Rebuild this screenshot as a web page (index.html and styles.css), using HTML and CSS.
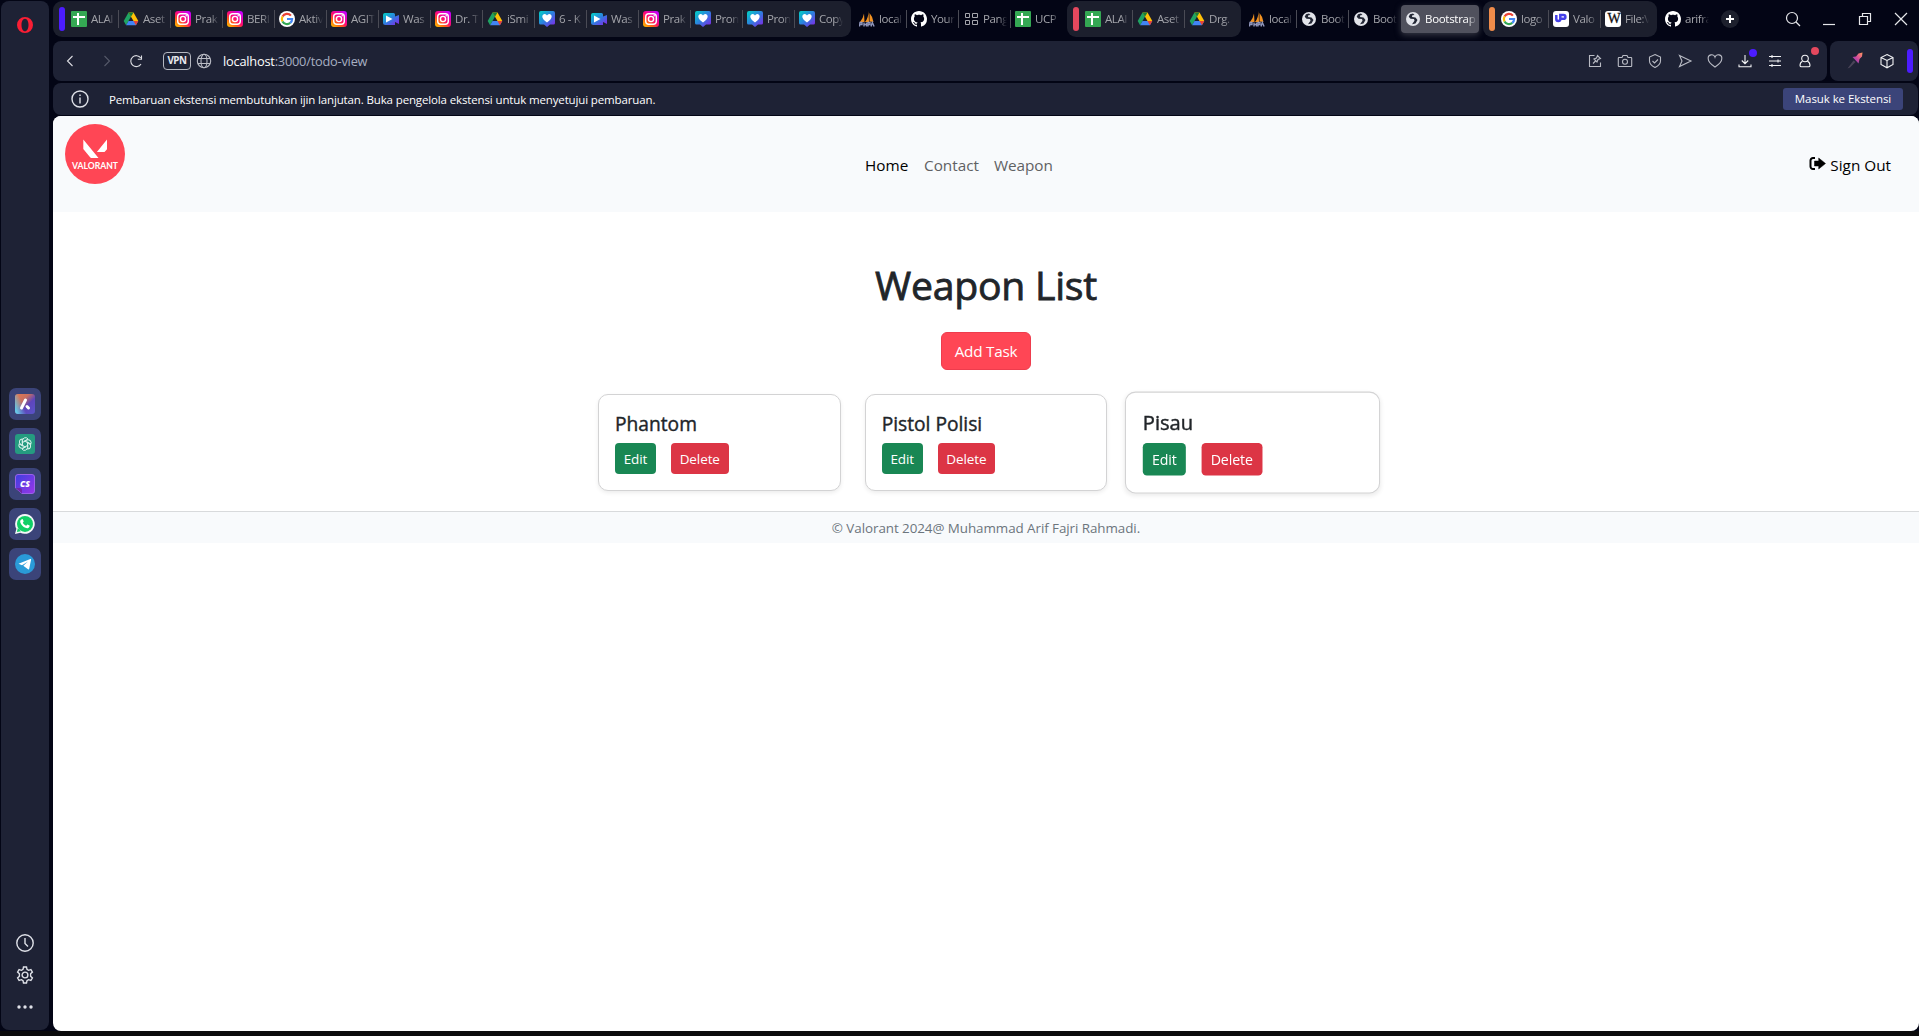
FILE: index.html
```html
<!DOCTYPE html>
<html lang="id">
<head>
<meta charset="utf-8">
<title>Weapon List</title>
<link rel="stylesheet" href="styles.css">
</head>
<body>
<svg class="sprite" width="0" height="0">
  <defs>
    <linearGradient id="g-ig" x1="0" y1="1" x2=".8" y2="0"><stop offset="0" stop-color="#ffc800"/><stop offset=".3" stop-color="#ff6a10"/><stop offset=".55" stop-color="#ff0a70"/><stop offset="1" stop-color="#c800ff"/></linearGradient>
    <linearGradient id="g-was" x1="0" y1="0" x2="1" y2="1"><stop offset="0" stop-color="#00d4c4"/><stop offset=".5" stop-color="#2f7de0"/><stop offset="1" stop-color="#8a1fe8"/></linearGradient>
    <linearGradient id="g-aria" x1="0" y1="0" x2="1" y2="1"><stop offset="0" stop-color="#e57a50"/><stop offset=".35" stop-color="#c8705f"/><stop offset=".6" stop-color="#5e45bb"/><stop offset="1" stop-color="#5a55c8"/></linearGradient>
    <linearGradient id="g-aria2" x1="0" y1=".7" x2="1" y2="0.3"><stop offset="0" stop-color="#65c8e8"/><stop offset=".4" stop-color="#65c8e8" stop-opacity="0"/></linearGradient>
    <linearGradient id="g-cs" x1="0" y1="0" x2="1" y2="1"><stop offset="0" stop-color="#3b3fe0"/><stop offset="1" stop-color="#9b35e8"/></linearGradient>
    <linearGradient id="g-pin" x1="1" y1="0" x2="0" y2="1"><stop offset="0" stop-color="#ff9a5c"/><stop offset=".5" stop-color="#d64a9a"/><stop offset="1" stop-color="#5a3ac0"/></linearGradient>
  </defs>
  <symbol id="sheet" viewBox="0 0 16 16"><rect width="16" height="16" rx="1" fill="#34a853"/><path d="M2 6h12M7 2v12" stroke="#fff" stroke-width="2"/></symbol>
  <symbol id="drive" viewBox="0 0 16 16"><path d="M5.500 1.500 0.700 10l2.400 4.200L8 5.600z" fill="#1fa463"/><path d="M5.500 1.500h5L15.300 10h-4.800z" fill="#ffc107"/><path d="M3.100 14.200 5.500 10h9.800l-2.400 4.200z" fill="#4285f4"/><path d="M10.500 10h4.800l-2.400 4.200z" fill="#ea4335"/><path d="M5.500 1.500h5L8 5.800z" fill="#188038"/></symbol>
  <symbol id="insta" viewBox="0 0 16 16"><rect width="16" height="16" rx="3" fill="url(#g-ig)"/><rect x="2.700" y="2.700" width="10.600" height="10.600" rx="3" fill="none" stroke="#fff" stroke-width="1.400"/><circle cx="8" cy="8" r="2.600" fill="none" stroke="#fff" stroke-width="1.400"/><circle cx="11.200" cy="4.800" r=".8" fill="#fff"/></symbol>
  <symbol id="google" viewBox="0 0 16 16"><circle cx="8" cy="8" r="8" fill="#fff"/><g fill="none" stroke-width="2.200"><path d="M11.900 4.600A5.100 5.100 0 0 0 3.500 5.600" stroke="#ea4335"/><path d="M3.500 5.600a5.100 5.100 0 0 0 0 4.800" stroke="#fbbc05"/><path d="M3.500 10.400a5.100 5.100 0 0 0 7.800 1.500" stroke="#34a853"/><path d="M11.300 11.900A5.100 5.100 0 0 0 13.100 8H8" stroke="#4285f4"/></g></symbol>
  <symbol id="video" viewBox="0 0 16 16"><path d="M2 2h8.500a1.500 1.500 0 0 1 1.500 1.500V5.500L16 4v9l-4-2v3H2.500A2.500 2.500 0 0 1 0 11.500V4a2 2 0 0 1 2-2z" fill="url(#g-was)"/><path d="M3 4.500 9.500 8 3 11.500z" fill="#fff"/></symbol>
  <symbol id="heart" viewBox="0 0 16 16"><path d="M2 0h12a2 2 0 0 1 2 2v10a1.500 1.500 0 0 1-1.500 1.500H11L8 16l-3-2.500H1.500A1.500 1.500 0 0 1 0 12V2a2 2 0 0 1 2-2z" fill="url(#g-was)"/><path d="M8 11.500C1 7 3.300 3 5.700 3 7 3 8 4.400 8 4.400S9 3 10.300 3C12.700 3 15 7 8 11.500z" fill="#fff"/></symbol>
  <symbol id="pma" viewBox="0 0 16 16"><path d="M1 11Q4 8 5 2.500L5.500 11zM6 11Q9.500 7 9.500 0L10 11zM10.500 10.500V2Q14 6 14.500 11z" fill="#f29222"/><path d="M.5 15.500 1 11.500h2v2H1.500M5 15.500v-4M7.500 11.500v4M5 13.500h2.500M9 15.500v-4h2v2H9.500M12 15.500l1.300-4 1.800 4" fill="none" stroke="#9298bd" stroke-width="1.400"/></symbol>
  <symbol id="github" viewBox="0 0 16 16"><path fill="#fff" d="M8 0C3.580 0 0 3.580 0 8c0 3.540 2.290 6.530 5.470 7.590.4.070.55-.17.55-.38 0-.19-.01-.82-.01-1.490-2.010.37-2.530-.49-2.690-.94-.09-.23-.48-.94-.82-1.130-.28-.15-.68-.52-.01-.53.63-.01 1.080.58 1.230.82.72 1.210 1.870.87 2.330.66.07-.52.28-.87.51-1.070-1.780-.2-3.640-.89-3.640-3.950 0-.87.31-1.590.82-2.150-.08-.2-.36-1.020.08-2.120 0 0 .67-.21 2.200.82.64-.18 1.320-.27 2-.27s1.360.09 2 .27c1.530-1.040 2.200-.82 2.200-.82.44 1.100.16 1.920.08 2.120.51.56.82 1.270.82 2.150 0 3.070-1.870 3.750-3.650 3.950.29.25.54.73.54 1.480 0 1.070-.01 1.930-.01 2.200 0 .21.15.46.55.38A8.010 8.010 0 0 0 16 8c0-4.420-3.580-8-8-8z"/></symbol>
  <symbol id="panels" viewBox="0 0 16 16"><path d="M2.500 2.500h4v4h-4zM9.500 2.500h5v4h-5zM2.500 9.500h4v4h-4zM9.500 9.500h5v4h-5z" fill="none" stroke="#a5a6ac"/></symbol>
  <symbol id="world" viewBox="0 0 16 16"><circle cx="8" cy="8" r="7" fill="#e2e4ea"/><path d="M8 2.500 5 3.300 3.700 5.800 5.500 7.800 9 8l.5 1.800L7 13.300l3.500-.8L12.500 9 10.500 6.500 7 6l.3-1.800L9.500 4z" fill="#232735"/></symbol>
  <symbol id="up" viewBox="0 0 16 16"><rect width="16" height="16" rx="3" fill="#fff"/><path d="M3.300 4v4a2 2 0 0 0 4 0V4h3.200a1.800 1.800 0 0 1 0 3.800H7" fill="none" stroke="#4540e8" stroke-width="2.500"/></symbol>
</svg>

<div class="browser">
  <aside class="sidebar">
    <svg class="opera" width="18" height="18" viewBox="0 0 18 18"><path fill-rule="evenodd" fill="#fa1e34" d="M9 1a8 8 0 1 0 0 16A8 8 0 0 0 9 1zm0 1.700c2.100 0 3.500 2.800 3.500 6.300s-1.400 6.300-3.500 6.300S5.500 12.500 5.500 9 6.900 2.700 9 2.700z"/></svg>
    <div class="apps">
      <span class="app"><svg width="20" height="20" viewBox="0 0 20 20"><rect width="20" height="20" rx="3" fill="url(#g-aria)"/><rect width="20" height="20" rx="3" fill="url(#g-aria2)"/><path d="M6.500 14 10.500 6M12 12.500l1.500 1.500" stroke="#fff" stroke-width="3" stroke-linecap="round"/></svg></span>
      <span class="app"><svg width="20" height="20" viewBox="0 0 20 20"><rect width="20" height="20" rx="3" fill="#259b80"/><g fill="none" stroke="#d5f0ea" stroke-width="1"><path id="petal" d="M7.500 12V6.600a3 3 0 0 1 5.500-1.600L8.800 7.500"/><use href="#petal" transform="rotate(60 10 10)"/><use href="#petal" transform="rotate(120 10 10)"/><use href="#petal" transform="rotate(180 10 10)"/><use href="#petal" transform="rotate(240 10 10)"/><use href="#petal" transform="rotate(300 10 10)"/></g></svg></span>
      <span class="app"><svg width="20" height="20" viewBox="0 0 20 20"><path d="M3 .5h14A2.500 2.500 0 0 1 19.500 3v14a2.500 2.500 0 0 1-2.500 2.500H7L.5 14V3A2.500 2.500 0 0 1 3 .5z" fill="url(#g-cs)" stroke="#9a62e8"/><path d="M.5 14H5a2 2 0 0 1 2 2v3.500" fill="#7026a8"/><text x="10" y="13" text-anchor="middle" font-family="Open Sans,sans-serif" font-size="8.500" font-weight="800" font-style="italic" fill="#fff">CS</text></svg></span>
      <span class="app"><svg width="20" height="20" viewBox="0 0 20 20"><path d="M10 0a9.900 9.900 0 1 1-4.700 18.700L0 20l1.400-5.200A9.900 9.900 0 0 1 10 0z" fill="#f4f6f8"/><circle cx="10" cy="9.900" r="8" fill="#10cf66"/><path d="M1.900 18l1-4 3 3.200z" fill="#10cf66"/><path d="M6.800 5.200c.6-.3 1 0 1.200.5l.7 1.700-.9 1.300c.8 1.500 1.800 2.400 3.400 3.100l1.200-1.200 2.200 1c.3.900-.5 2.400-1.800 2.600-3 .5-7.500-3.500-7.600-6.700 0-1 .6-1.900 1.600-2.300z" fill="#fff"/></svg></span>
      <span class="app"><svg width="20" height="20" viewBox="0 0 20 20"><circle cx="10" cy="10" r="10" fill="#2a9bd8"/><path d="M3.500 9.700 15.300 5c.6-.2.900.1.800.8l-1.900 9c-.2.700-.7.800-1.200.4L8.300 11.800 13 7.500l-6 3.800z" fill="#fff"/></svg></span>
    </div>
    <div class="tools">
      <svg width="18" height="18" viewBox="0 0 18 18"><circle cx="9" cy="9" r="8.200"/><path d="M9 4v5.500l3 3"/></svg>
      <svg width="18" height="18" viewBox="0 0 18 18"><path d="M7.500 1h3l.5 2.400 1.500.9 2.400-.8 1.500 2.600-1.800 1.600v2.600l1.800 1.600-1.500 2.600-2.400-.8-1.500.9-.5 2.400h-3L7 14.600l-1.500-.9-2.400.8-1.500-2.600 1.800-1.600V7.700L1.600 6.100l1.500-2.600 2.400.8L7 3.400z"/><circle cx="9" cy="9" r="2.900"/></svg>
      <svg width="18" height="18" viewBox="0 0 18 18"><g fill="#dfe1e8" stroke="none"><circle cx="3" cy="9" r="1.700"/><circle cx="9" cy="9" r="1.700"/><circle cx="15" cy="9" r="1.700"/></g></svg>
    </div>
  </aside>

  <div class="main">
    <div class="tabs">
      <div class="group">
        <i class="mark"></i>
        <span class="tab"><svg><use href="#sheet"/></svg><b>ALAI</b></span>
        <span class="tab"><svg><use href="#drive"/></svg><b>Aset</b></span>
        <span class="tab"><svg><use href="#insta"/></svg><b>Prak</b></span>
        <span class="tab"><svg><use href="#insta"/></svg><b>BERI</b></span>
        <span class="tab"><svg><use href="#google"/></svg><b>Aktiv</b></span>
        <span class="tab"><svg><use href="#insta"/></svg><b>AGIT</b></span>
        <span class="tab"><svg><use href="#video"/></svg><b>Was</b></span>
        <span class="tab"><svg><use href="#insta"/></svg><b>Dr. T</b></span>
        <span class="tab"><svg><use href="#drive"/></svg><b>iSmi</b></span>
        <span class="tab"><svg><use href="#heart"/></svg><b>6 - K</b></span>
        <span class="tab"><svg><use href="#video"/></svg><b>Was</b></span>
        <span class="tab"><svg><use href="#insta"/></svg><b>Prak</b></span>
        <span class="tab"><svg><use href="#heart"/></svg><b>Pron</b></span>
        <span class="tab"><svg><use href="#heart"/></svg><b>Pron</b></span>
        <span class="tab last"><svg><use href="#heart"/></svg><b>Copy</b></span>
      </div>
      <div class="loose">
        <span class="tab"><svg><use href="#pma"/></svg><b>local</b></span>
        <span class="tab"><svg><use href="#github"/></svg><b>Your</b></span>
        <span class="tab"><svg><use href="#panels"/></svg><b>Pang</b></span>
        <span class="tab last"><svg><use href="#sheet"/></svg><b>UCP</b></span>
      </div>
      <div class="group">
        <i class="mark red"></i>
        <span class="tab"><svg><use href="#sheet"/></svg><b>ALAI</b></span>
        <span class="tab"><svg><use href="#drive"/></svg><b>Aset</b></span>
        <span class="tab last"><svg><use href="#drive"/></svg><b>Drg.</b></span>
      </div>
      <div class="loose">
        <span class="tab"><svg><use href="#pma"/></svg><b>local</b></span>
        <span class="tab"><svg><use href="#world"/></svg><b>Boot</b></span>
        <span class="tab last"><svg><use href="#world"/></svg><b>Boot</b></span>
        <span class="tab active"><svg><use href="#world"/></svg><b>Bootstrap</b></span>
      </div>
      <div class="group">
        <i class="mark orange"></i>
        <span class="tab"><svg><use href="#google"/></svg><b>logo</b></span>
        <span class="tab"><svg><use href="#up"/></svg><b>Valo</b></span>
        <span class="tab last"><span class="wiki">W</span><b>File:V</b></span>
      </div>
      <div class="loose">
        <span class="tab last"><svg><use href="#github"/></svg><b>arifra</b></span>
      </div>
      <svg class="plus" width="18" height="18" viewBox="0 0 18 18"><circle cx="9" cy="9" r="9" fill="#1d202d"/><path d="M9 5v8M5 9h8" stroke="#fff" stroke-width="2"/></svg>
      <div class="window">
        <svg width="16" height="16" viewBox="0 0 16 16"><circle cx="7" cy="7" r="5.500"/><path d="m11 11 4 4"/></svg>
        <svg width="16" height="16" viewBox="0 0 16 16"><path d="M2 13.500h12"/></svg>
        <svg width="16" height="16" viewBox="0 0 16 16"><path d="M2.500 5.500h8v8h-8zM5.500 5.500v-3h8v8h-3"/></svg>
        <svg width="16" height="16" viewBox="0 0 16 16"><path d="m2 2 12 12M14 2 2 14"/></svg>
      </div>
    </div>

    <div class="toolbar">
      <div class="address">
        <svg class="back" width="16" height="16" viewBox="0 0 16 16"><path d="M10.500 3 5.500 8l5 5"/></svg>
        <svg class="fwd" width="16" height="16" viewBox="0 0 16 16"><path d="m5.500 3 5 5-5 5"/></svg>
        <svg class="reload" width="16" height="16" viewBox="0 0 16 16"><path d="M12.800 5A5.500 5.500 0 1 0 13 11M13.500 2.500v3.700H9.800"/></svg>
        <span class="vpn">VPN</span>
        <svg class="globe" width="16" height="16" viewBox="0 0 16 16"><circle cx="8" cy="8" r="6.700"/><ellipse cx="8" cy="8" rx="3" ry="6.700"/><path d="M2 5.500h12M2 10.500h12"/></svg>
        <span class="url">localhost<em>:3000/todo-view</em></span>
        <div class="actions">
          <svg viewBox="0 0 16 16"><path d="M7.500 2.500h-5v11h11v-4M6 10.500l3-3M7 6l3 3 1-2.500 2.500-1-3-3-1 2.500z"/></svg>
          <svg viewBox="0 0 16 16"><path d="M2 4.500h3l1-2h4l1 2h3a.7.700 0 0 1 .7.700v7.600a.7.700 0 0 1-.7.700H2a.7.700 0 0 1-.7-.7V5.200A.7.700 0 0 1 2 4.500z"/><circle cx="8" cy="8.700" r="2.500"/></svg>
          <svg viewBox="0 0 16 16"><path d="M8 1.500 13.500 4v4c0 3-2.500 5-5.500 6.500C5 13 2.500 11 2.500 8V4zM5.500 8l2 2 3.500-3.500"/></svg>
          <svg viewBox="0 0 16 16"><path d="m2.500 2.500 11.500 5.500-11.500 5.500L5 8z"/></svg>
          <svg viewBox="0 0 16 16"><path d="M8 14C5 12 1.200 9.500 1.200 5.700A3.500 3.500 0 0 1 8 4.200a3.500 3.500 0 0 1 6.800 1.500C14.800 9.500 11 12 8 14z"/></svg>
          <span class="badged"><svg viewBox="0 0 16 16" class="bright"><path d="M8 2v8.500M4.800 7.500 8 10.700l3.200-3.200M2 11.500v2.300h12v-2.300"/></svg><i class="dot"></i></span>
          <svg viewBox="0 0 16 16" class="bright"><path d="M2 3.500h12M2 8h12M2 12.500h12M5 2v3M11 6.500v3M5 11v3"/></svg>
          <span class="badged"><svg viewBox="0 0 16 16" class="bright"><circle cx="8" cy="5.500" r="3.300"/><path d="M5.500 8.200C3.500 9 3 10.500 3 12.500c0 1 .5 1.300 1.500 1.300h7c1 0 1.500-.3 1.500-1.300 0-2-.5-3.500-2.500-4.300"/></svg><i class="dot coral"></i></span>
        </div>
      </div>
      <div class="extras">
        <svg class="pin" width="18" height="18" viewBox="0 0 18 18"><path d="M1.500 16.500 7.500 8.500l2 1.500-5.500 5.500z" fill="#4a4558"/><path d="m6.500 5 3.500-.500L12.500 1.500 16.500.5l-.5 4-2.500 2.500-1 4.500z" fill="url(#g-pin)"/></svg>
        <svg class="bright" width="16" height="16" viewBox="0 0 16 16"><path d="M8 1.500 14 4.500v7L8 14.800 2 11.500v-7zM2 4.500l6 3 6-3M8 7.500v7"/></svg>
        <i class="mark"></i>
      </div>
    </div>

    <div class="notice">
      <svg width="18" height="18" viewBox="0 0 18 18"><circle cx="9" cy="9" r="8"/><path d="M9 7.500v6M9 4.500v1.500"/></svg>
      <span class="message">Pembaruan ekstensi membutuhkan ijin lanjutan. Buka pengelola ekstensi untuk menyetujui pembaruan.</span>
      <span class="open">Masuk ke Ekstensi</span>
    </div>

    <div class="page">
      <header class="navbar">
        <svg class="logo" width="60" height="60" viewBox="0 0 60 60"><circle cx="30" cy="30" r="30" fill="#ff4655"/><path d="M18.300 15.500 33.500 34h-7.200a1.500 1.500 0 0 1-1-.5l-7-8.600zM42 15.500v9.800l-2.500 2.700h-7.600z" fill="#fff"/><text x="7" y="45" textLength="46" lengthAdjust="spacingAndGlyphs" font-family="Lato,sans-serif" font-size="9.200" font-weight="700" fill="#fff">VALORANT</text></svg>
        <nav class="links">
          <a class="home">Home</a><a class="contact">Contact</a><a class="weapon">Weapon</a>
        </nav>
        <a class="signout"><svg width="17" height="16" viewBox="0 0 17 16"><path d="M6 2H4a2.500 2.500 0 0 0-2.500 2.500v6A2.500 2.500 0 0 0 4 13h2" fill="none" stroke="#000" stroke-width="2"/><path d="M5.500 5h4.200V2L16.500 7.500 9.700 13v-3H5.500z" stroke="#000" stroke-linejoin="round" stroke-width=".5"/></svg><span>Sign Out</span></a>
      </header>
      <main class="content">
        <h1>Weapon List</h1>
        <button class="add">Add Task</button>
        <div class="cards">
          <article class="card"><h5>Phantom</h5><div class="buttons"><button class="edit">Edit</button><button class="delete">Delete</button></div></article>
          <article class="card"><h5>Pistol Polisi</h5><div class="buttons"><button class="edit">Edit</button><button class="delete">Delete</button></div></article>
          <article class="card raised"><h5>Pisau</h5><div class="buttons"><button class="edit">Edit</button><button class="delete">Delete</button></div></article>
        </div>
      </main>
      <footer class="footer"><span>© Valorant 2024@ Muhammad Arif Fajri Rahmadi.</span></footer>
    </div>
  </div>
</div>
</body>
</html>
```
FILE: styles.css
```css
* { box-sizing: border-box; }
body { margin: 0; height: 1036px; overflow: hidden; background: #0b0b0c; font-family: "Open Sans", "Noto Sans", sans-serif; }
.sprite { position: absolute; }
svg { display: block; flex: none; }
i, em { font-style: normal; }
button { border: 0; font: inherit; color: #fff; }

.browser { display: flex; gap: 4px; height: 1031px; padding: 1px 0 0 1px; background: #030515; }

/* Sidebar */
.sidebar { width: 48px; height: 1029px; border-radius: 8px; background: #1e2235; display: flex; flex-direction: column; align-items: center; }
.opera { margin-top: 15px; }
.apps { display: flex; flex-direction: column; gap: 8px; margin-top: 354px; }
.app { width: 32px; height: 32px; border-radius: 7px; background: #3b4479; display: grid; place-items: center; }
.tools { display: flex; flex-direction: column; gap: 14px; margin-top: 354px; }
.tools svg, .notice svg { fill: none; stroke: #dfe1e8; stroke-width: 1.4; }

.main { flex: 1; min-width: 0; display: flex; flex-direction: column; }

/* Tab strip */
.tabs { display: flex; align-items: center; height: 36px; margin-bottom: 4px; }
.group { display: flex; align-items: center; height: 36px; padding-left: 6px; border-radius: 9px; background: #1c1f2d; }
.mark { width: 6px; height: 24px; border-radius: 3px; background: #4c1cff; margin-right: 6px; }
.mark.red { background: #e4485e; }
.mark.orange { background: #f08c4a; }
.loose { display: flex; align-items: center; margin-left: 8px; }
.tab { display: flex; align-items: center; gap: 4px; width: 52px; height: 18px; background: linear-gradient(#4a4b55, #4a4b55) 47px 0 / 1px 18px no-repeat; }
.tab.last { background: none; }
.tab svg { width: 16px; height: 16px; }
.tab b { width: 25px; overflow: hidden; white-space: nowrap; font-weight: 400; font-size: 11.5px; line-height: 18px; letter-spacing: -.4px; color: #a3a4aa; mask-image: linear-gradient(90deg, #000 62%, transparent 96%); }
.wiki { flex: none; width: 16px; height: 16px; border-radius: 3px; background: #fff; color: #111; font: 14px/16px "Liberation Serif", serif; text-align: center; text-indent: 1px; letter-spacing: -1px; -webkit-text-stroke: .3px #111; }
.tab.active { width: 78px; height: 28px; margin: 0 4px 0 -4px; padding-left: 4px; border-radius: 4px; background: #50515d; box-shadow: 0 2px 6px #6a6b7480; }
.tab.active b { width: 52px; letter-spacing: -.3px; color: #fff; mask-image: linear-gradient(90deg, #000 80%, transparent); }
.plus { margin-left: 4px; }
.window { display: flex; gap: 20px; margin-left: 46px; }
.window svg { fill: none; stroke: #e6e7ea; stroke-width: 1.2; }

/* Address bar */
.toolbar { display: flex; gap: 3px; height: 40px; margin-bottom: 2px; }
.address { display: flex; align-items: center; width: 1774px; border-radius: 8px; padding-left: 9px; background: #1e2235; }
.toolbar svg { fill: none; stroke: #b9bbc4; stroke-width: 1.1; }
.toolbar .bright { stroke: #f2f3f5; }
.toolbar .back, .toolbar .reload { stroke: #dcdde2; }
.toolbar .fwd { margin-left: 21px; stroke: #555969; }
.toolbar .pin { stroke: none; }
.reload { margin-left: 13px; }
.vpn { width: 28px; height: 18px; margin-left: 19px; border: 1.5px solid #b4b7c0; border-radius: 4px; color: #e8e9ee; font-size: 9.8px; font-weight: 700; line-height: 16px; text-align: center; letter-spacing: -.5px; }
.globe { margin-left: 5px; }
.url { margin-left: 11px; font-size: 12.8px; letter-spacing: -.22px; color: #fff; white-space: nowrap; }
.url em { color: #a7afc2; }
.actions { display: flex; gap: 14px; margin-left: auto; padding-right: 14px; }
.actions svg { width: 16px; height: 16px; }
.badged { position: relative; }
.dot { position: absolute; left: 12px; top: -4px; width: 8px; height: 8px; border-radius: 50%; background: #4c1cff; }
.dot.coral { left: 14px; top: -6px; background: #e4485e; }
.extras { display: flex; align-items: center; width: 88px; padding-left: 16px; border-radius: 8px; background: #1e2235; }
.extras .bright { margin-left: 15px; }
.extras .mark { margin: 0 0 0 12px; }

/* Extension notice */
.notice { display: flex; align-items: center; height: 32px; margin-right: 1px; padding: 0 15px 0 18px; border-radius: 8px; background: #1e2235; color: #fff; font-size: 11.5px; white-space: nowrap; }
.message { margin-left: 20px; letter-spacing: -.135px; }
.open { width: 120px; height: 22px; margin-left: auto; border-radius: 3px; background: #3b4479; line-height: 21px; text-align: center; letter-spacing: -.08px; }

/* Web page */
.page { flex: 1; margin-top: 1px; border-radius: 8px; overflow: hidden; background: #fff; color: #212529; }
.navbar { display: flex; height: 96px; background: #f8fafc; font-size: 15.3px; line-height: 26px; }
.logo { margin: 8px 0 0 12px; }
.links { display: flex; margin: 36px 0 0 740px; color: #5f6163; }
.links a { white-space: nowrap; }
.home { width: 59px; color: #000; }
.contact { width: 70px; }
.weapon { width: 60px; letter-spacing: -.05px; }
.signout { display: flex; gap: 4px; margin: 36px 28px 0 auto; color: #000; white-space: nowrap; }
.signout svg { margin-top: 4px; }

.content { display: flex; flex-direction: column; align-items: center; height: 299px; padding-top: 49px; }
h1 { margin: 0; font-size: 39.2px; font-weight: 400; line-height: 48px; letter-spacing: -.25px; white-space: nowrap; -webkit-text-stroke: .8px #212529; }
.add { width: 90px; height: 38px; margin-top: 23px; padding: 0; border: 1px solid #ee3c4d; border-radius: 6px; background: #ff4655; font-size: 15.3px; letter-spacing: -.25px; white-space: nowrap; }
.cards { display: flex; gap: 24px; margin-top: 24px; }
.card { width: 242.67px; height: 97px; padding: 16px; border: 1px solid #d3d3d4; border-radius: 10px; background: #fff; box-shadow: 0 2px 4px #00000013; }
.raised { position: relative; left: -.5px; transform: scale(1.05); }
h5 { margin: 0 0 7px; font-size: 19.2px; font-weight: 400; line-height: 25px; white-space: nowrap; -webkit-text-stroke: .4px #212529; }
.buttons { display: flex; gap: 15px; }
.buttons button { height: 31px; padding: 0; border-radius: 4px; font-size: 13.5px; letter-spacing: -.1px; }
.edit { width: 41px; background: #198754; }
.delete { width: 57.5px; background: #dc3545; }

.footer { height: 32px; border-top: 1px solid #d8dadc; background: #f8fafc; color: #6c757d; font-size: 13.4px; line-height: 32px; letter-spacing: -.06px; text-align: center; }
```
